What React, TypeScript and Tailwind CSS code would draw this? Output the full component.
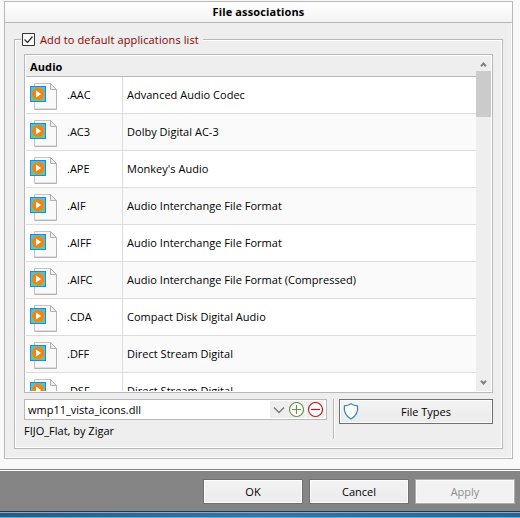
import React from "react";

const rows: [string, string][] = [
  [".AAC", "Advanced Audio Codec"],
  [".AC3", "Dolby Digital AC-3"],
  [".APE", "Monkey's Audio"],
  [".AIF", "Audio Interchange File Format"],
  [".AIFF", "Audio Interchange File Format"],
  [".AIFC", "Audio Interchange File Format (Compressed)"],
  [".CDA", "Compact Disk Digital Audio"],
  [".DFF", "Direct Stream Digital"],
  [".DSF", "Direct Stream Digital"],
];

function MediaIcon() {
  return (
    <svg width="28" height="29" viewBox="0 0 28 29" className="block shrink-0">
      <path d="M4.5 1.5h16l6 6v19.5h-22z" fill="#f9f9f9" stroke="#c4c4c4" />
      <path d="M4.5 27.5h22V8" fill="none" stroke="#b4b4b4" />
      <path d="M20.5 1.5v6h6z" fill="#eeeeee" stroke="#b0b0b0" />
      <rect x=".5" y="4.5" width="15" height="15" fill="#6cc78c" stroke="#1788ee" />
      <path d="M1 5h14v5H1z" fill="#62bdb8" />
      <circle cx="8" cy="12" r="6" fill="#f7820e" />
      <path d="M6 8.5v7l5.2-3.5z" fill="#fff" />
    </svg>
  );
}

function Arrow({ down = false }: { down?: boolean }) {
  return (
    <svg width="15" height="15" viewBox="0 0 15 15" className={down ? "block rotate-180" : "block"}>
      <path d="M5 10.2 7.5 7.5 10 10.2" fill="none" stroke="#808080" strokeWidth="2" />
    </svg>
  );
}

function DialogButton({ label, disabled = false }: { label: string; disabled?: boolean }) {
  return (
    <button
      className={
        "h-[25px] w-[100px] border pt-px " +
        (disabled
          ? "border-[#acacac] bg-[#f2f2f2] text-[#8d8d8d] shadow-[inset_0_0_0_1px_#fafafa]"
          : "border-[#707070] bg-linear-to-b from-[#f3f3f3] to-[#ebebeb] shadow-[inset_0_0_0_1px_#fcfcfc]")
      }
    >
      {label}
    </button>
  );
}

export default function App() {
  return (
    <div className="flex h-[518px] w-[520px] flex-col overflow-hidden bg-[#f9f9f9] font-['Open_Sans','Noto_Sans',sans-serif] text-[11px] leading-[16px] whitespace-nowrap text-black">
      <section className="mt-px ml-1 h-[458px] w-[509px] shrink-0 border border-[#b8b8b8] bg-[#eeeeee] shadow-[inset_-1px_-1px_0_#fff]">
        <h1 className="flex h-[21px] items-center justify-center border-b border-[#b8b8b8] bg-linear-to-b from-white to-[#f3f3f3] font-bold tracking-[0.12px]">
          File associations
        </h1>
        <fieldset className="mt-[16px] ml-[9px] h-[410px] w-[489px] border border-[#b8b8b8] shadow-[inset_1px_1px_0_#fff,inset_-1px_-1px_0_#fff]">
          <div className="-mt-[8px] ml-[6px] flex h-4 w-[182px] items-center bg-[#eeeeee] tracking-[0.12px] text-[#8b0000]">
            <svg width="13" height="13" viewBox="0 0 13 13" className="-mt-px mr-[5px] ml-px shrink-0">
              <path d="M.5.5h12v12H.5z" fill="#fff" stroke="#333" />
              <path d="m2.5 6.5 3 3 5-6" fill="none" stroke="#333" strokeWidth="1.3" />
            </svg>
            <span className="pb-px">Add to default applications list</span>
          </div>
          <div className="mt-[6px] ml-[9px] flex h-[339px] w-[469px] border border-[#b8b8b8] bg-white p-px">
            <div className="h-[335px] w-[450px] overflow-hidden">
              <div className="flex h-[21px] items-center border-b border-[#b8b8b8] bg-[#eeeeee] pt-[2px] pl-[4px] font-bold tracking-[0.12px]">
                Audio
              </div>
              {rows.map(([ext, label], i) => (
                <div
                  key={ext}
                  className={"flex h-[37px] border-b border-[#dcdcdc] " + (i % 2 ? "bg-[#fafafa]" : "bg-white")}
                >
                  <div className="flex w-[97px] items-center border-r border-[#dcdcdc] pt-[2px] pl-[4px]">
                    <MediaIcon />
                    <span className="ml-[9px] pb-[2px]">{ext}</span>
                  </div>
                  <div className="flex items-center pl-[4px] tracking-[0.02px]">{label}</div>
                </div>
              ))}
            </div>
            <div className="flex h-[335px] w-[15px] flex-col bg-[#eeeeee]">
              <Arrow />
              <div className="h-[46px] shrink-0 bg-[#cbcbcb]" />
              <div className="mt-auto h-[15px]">
                <Arrow down />
              </div>
            </div>
          </div>
          <div className="mt-[6px] ml-[9px] flex">
            <div className="w-[303px]">
              <div className="flex h-[21px] items-center border border-[#b8b8b8] bg-white p-px pl-[3px]">
                <span className="w-[242px] pt-px">wmp11_vista_icons.dll</span>
                <div className="flex h-[17px] w-[17px] items-center justify-center bg-[#eeeeee]">
                  <svg width="12" height="8" viewBox="0 0 12 8">
                    <path d="m1 1.5 5 5 5-5" fill="none" stroke="#777" strokeWidth="1.3" />
                  </svg>
                </div>
                <div className="flex h-[17px] w-[18px] items-center justify-center bg-[#eeeeee]">
                  <svg width="16" height="16" viewBox="0 0 16 16" className="shrink-0">
                    <circle cx="8.5" cy="7.5" r="7" fill="#fff" stroke="#669044" strokeWidth="1.1" />
                    <path d="M4 7.5h9M8.5 3v9" stroke="#669044" strokeWidth="1.1" />
                  </svg>
                </div>
                <div className="ml-px flex h-[17px] w-[18px] items-center justify-center bg-[#eeeeee]">
                  <svg width="16" height="16" viewBox="0 0 16 16" className="shrink-0">
                    <circle cx="8.5" cy="7.5" r="7" fill="#fff" stroke="#bd151b" strokeWidth="1.1" />
                    <path d="M4 7.5h9" stroke="#bd151b" strokeWidth="1.2" />
                  </svg>
                </div>
              </div>
              <div className="mt-[3px]">FIJO_Flat, by Zigar</div>
            </div>
            <div className="ml-[6px] h-[40px] w-[2px] border-r border-l border-r-white border-l-[#b8b8b8]" />
            <button className="ml-[4px] flex h-[25px] w-[154px] items-center border border-[#707070] bg-linear-to-b from-[#f3f3f3] to-[#ebebeb] shadow-[inset_0_0_0_1px_#fcfcfc]">
              <svg width="16" height="17" viewBox="0 0 16 17" className="-mt-px ml-[3px] shrink-0">
                <path
                  d="M8 .8C6 2.2 4 2.8 1.5 2.8c-.4 2.5-.2 5.5 1 7.7C3.6 12.8 5.5 14.7 8 16c2.5-1.3 4.4-3.2 5.5-5.5 1.2-2.2 1.4-5.2 1-7.7C12 2.8 10 2.2 8 .8z"
                  fill="#fff"
                  stroke="#3988b5"
                  strokeWidth="1.3"
                />
              </svg>
              <span className="ml-[42px] pt-px">File Types</span>
            </button>
          </div>
        </fieldset>
      </section>
      <div className="mt-[10px] h-px shrink-0 bg-[#858585]" />
      <div className="h-px shrink-0 bg-white" />
      <footer className="flex h-[40px] shrink-0 gap-[6px] bg-[#858585] pt-[8px] pl-[203px]">
        <DialogButton label="OK" />
        <DialogButton label="Cancel" />
        <DialogButton label="Apply" disabled />
      </footer>
      <div className="h-px shrink-0 bg-[#253846]" />
      <div className="h-px shrink-0 bg-[#8aaac6]" />
      <div className="h-[4px] shrink-0 bg-linear-to-r from-[#305780] via-[#3f70a4] to-[#315f91]" />
      <div className="h-px shrink-0 bg-[#35c4ee]" />
    </div>
  );
}
